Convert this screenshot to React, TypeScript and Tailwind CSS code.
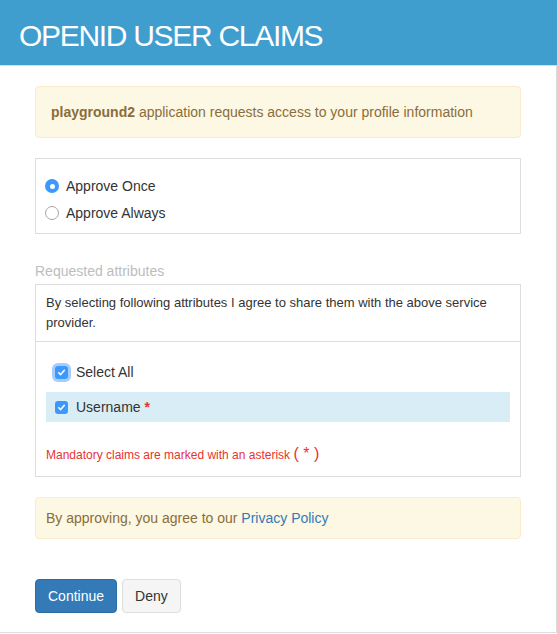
import { useState } from 'react'

function Radio({ checked }: { checked: boolean }) {
  return checked ? (
    <span className="flex h-[14px] w-[14px] shrink-0 items-center justify-center rounded-full bg-[#3b99fc]">
      <span className="h-[5px] w-[5px] rounded-full bg-white" />
    </span>
  ) : (
    <span className="h-[14px] w-[14px] shrink-0 rounded-full border border-[#a6a6a6] bg-white" />
  )
}

function Checkbox({ focused }: { focused?: boolean }) {
  return (
    <span
      className={
        focused
          ? 'flex h-[13px] w-[13px] shrink-0 items-center justify-center rounded-[3px] bg-[#3b99fc] shadow-[0_0_0_3px_rgba(95,160,245,0.55)]'
          : 'flex h-[13px] w-[13px] shrink-0 items-center justify-center rounded-[3px] bg-[#3b99fc]'
      }
    >
      <svg width="9" height="9" viewBox="0 0 9 9" fill="none">
        <path d="M1.8 4.8 L3.6 6.6 L7.2 2.4" stroke="white" strokeWidth="1.6" strokeLinecap="round" strokeLinejoin="round" />
      </svg>
    </span>
  )
}

export default function App() {
  const [approve] = useState<'once' | 'always'>('once')

  return (
    <div className="w-[557px] bg-white font-['Liberation_Sans',Arial,sans-serif] text-[14px] leading-[20px] text-[#333]">
      <header className="h-[65px] bg-[#409ecf] pl-[19px] pt-[20px]">
        <h1 className="text-[30px] leading-[32px] tracking-[-1.3px] text-white">OPENID USER CLAIMS</h1>
      </header>

      <main className="border-t border-r border-b border-[#ddd] px-[35px] pt-[20px] pb-[19px]">
        <div className="mb-[20px] rounded-[4px] border border-[#faebcc] bg-[#fcf8e3] p-[15px] text-[#8a6d3b]">
          <strong>playground2</strong> application requests access to your profile information
        </div>

        <div className="flex flex-col gap-[7px] border border-[#ddd] px-[9px] pt-[17px] pb-[10px]">
          <label className="flex items-center gap-[7px]">
            <Radio checked={approve === 'once'} />
            <span>Approve Once</span>
          </label>
          <label className="flex items-center gap-[7px]">
            <Radio checked={approve === 'always'} />
            <span>Approve Always</span>
          </label>
        </div>

        <div className="mt-[27px] mb-[3px] text-[#bdbdbd]">Requested attributes</div>

        <div className="border border-[#ddd]">
          <div className="border-b border-[#ddd] px-[10px] py-[8px] text-[13px]">
            By selecting following attributes I agree to share them with the above service provider.
          </div>
          <div className="px-[10px] pt-[20px] pb-[11px]">
            <div className="flex items-center gap-[8px] pl-[9px]">
              <Checkbox focused />
              <span>Select All</span>
            </div>
            <div className="mt-[10px] flex h-[30px] items-center gap-[8px] bg-[#d9edf7] pl-[9px]">
              <Checkbox />
              <span>
                Username <span className="font-bold text-[#e8322f]">*</span>
              </span>
            </div>
            <div className="mt-[22px] text-[12px] text-[#e8322f]">
              Mandatory claims are marked with an asterisk <span className="text-[16px]">( * )</span>
            </div>
          </div>
        </div>

        <div className="mt-[20px] rounded-[4px] border border-[#faebcc] bg-[#fcf8e3] p-[10px] text-[#8a6d3b]">
          By approving, you agree to our <a className="text-[#337ab7]">Privacy Policy</a>
        </div>

        <div className="mt-[40px] flex gap-[5px]">
          <button className="rounded-[4px] border border-[#2e6da4] bg-[#337ab7] px-[12px] py-[6px] text-white">
            Continue
          </button>
          <button className="rounded-[4px] border border-[#ddd] bg-[#f5f5f5] px-[12px] py-[6px] text-[#333]">
            Deny
          </button>
        </div>
      </main>
    </div>
  )
}
